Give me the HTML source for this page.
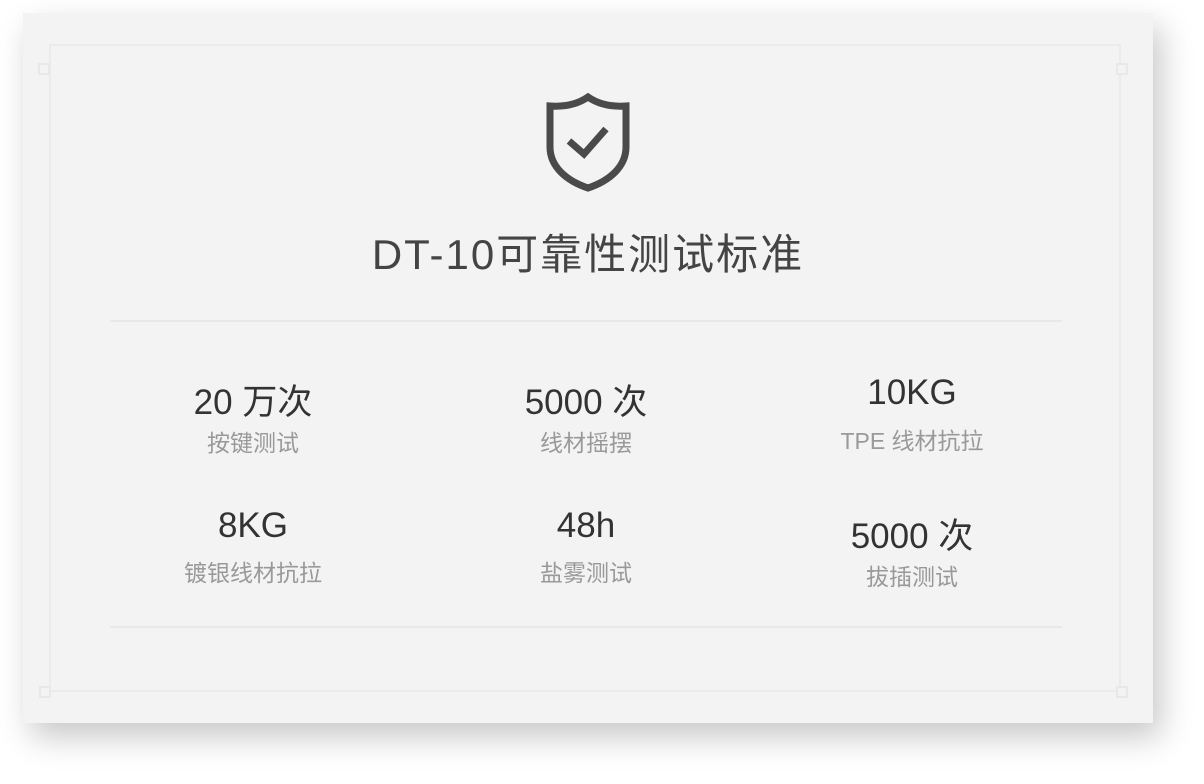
<!DOCTYPE html>
<html><head><meta charset="utf-8"><style>
html,body{margin:0;padding:0;background:#fff;width:1204px;height:784px;overflow:hidden;font-family:"Liberation Sans","Noto Sans CJK SC",sans-serif}
.card{position:absolute;left:23px;top:13px;width:1130px;height:710px;background:#f3f3f3;box-shadow:8px 14px 30px rgba(0,0,0,0.22)}
.inner{position:absolute;left:49px;top:44px;width:1068px;height:644px;border:2px solid #ebebeb}
.sq{position:absolute;width:8px;height:8px;border:2px solid #e8e8e8;background:#f3f3f3}
.line{position:absolute;left:110px;width:952px;height:2px;background:#e8e8e8}
.t{position:absolute;text-align:center;width:300px;white-space:nowrap}
.v{font-size:35px;color:#333}
.l{font-size:23px;color:#999}
.title{position:absolute;left:0;width:1176px;top:221px;text-align:center;font-size:42px;color:#444;letter-spacing:2px}
</style></head><body>
<div class="card"></div>
<div class="inner"></div>
<div class="sq" style="left:38px;top:63px"></div>
<div class="sq" style="left:1116px;top:63px"></div>
<div class="sq" style="left:39px;top:686px"></div>
<div class="sq" style="left:1116px;top:686px"></div>
<svg style="position:absolute;left:545px;top:93px" width="86" height="100" viewBox="0 0 86 100">
<path d="M43 4 C33 11 20 14 5 13 V54 C5 74 22 88 43 95 C64 88 81 74 81 54 V13 C66 14 53 11 43 4 Z" fill="none" stroke="#4a4a4a" stroke-width="7" stroke-linejoin="miter"/>
<path d="M24 48 L39 61 L61 36" fill="none" stroke="#4a4a4a" stroke-width="7"/>
</svg>
<div class="title">DT-10可靠性测试标准</div>
<div class="line" style="top:320px"></div>
<div class="line" style="top:626px"></div>
<div class="t v" style="left:103px;top:374px">20 万次</div>
<div class="t l" style="left:103px;top:424px">按键测试</div>
<div class="t v" style="left:436px;top:374px">5000 次</div>
<div class="t l" style="left:436px;top:424px">线材摇摆</div>
<div class="t v" style="left:762px;top:373px">10KG</div>
<div class="t l" style="left:762px;top:422px">TPE 线材抗拉</div>
<div class="t v" style="left:103px;top:506px">8KG</div>
<div class="t l" style="left:103px;top:554px">镀银线材抗拉</div>
<div class="t v" style="left:436px;top:506px">48h</div>
<div class="t l" style="left:436px;top:554px">盐雾测试</div>
<div class="t v" style="left:762px;top:508px">5000 次</div>
<div class="t l" style="left:762px;top:558px">拔插测试</div>
</body></html>
